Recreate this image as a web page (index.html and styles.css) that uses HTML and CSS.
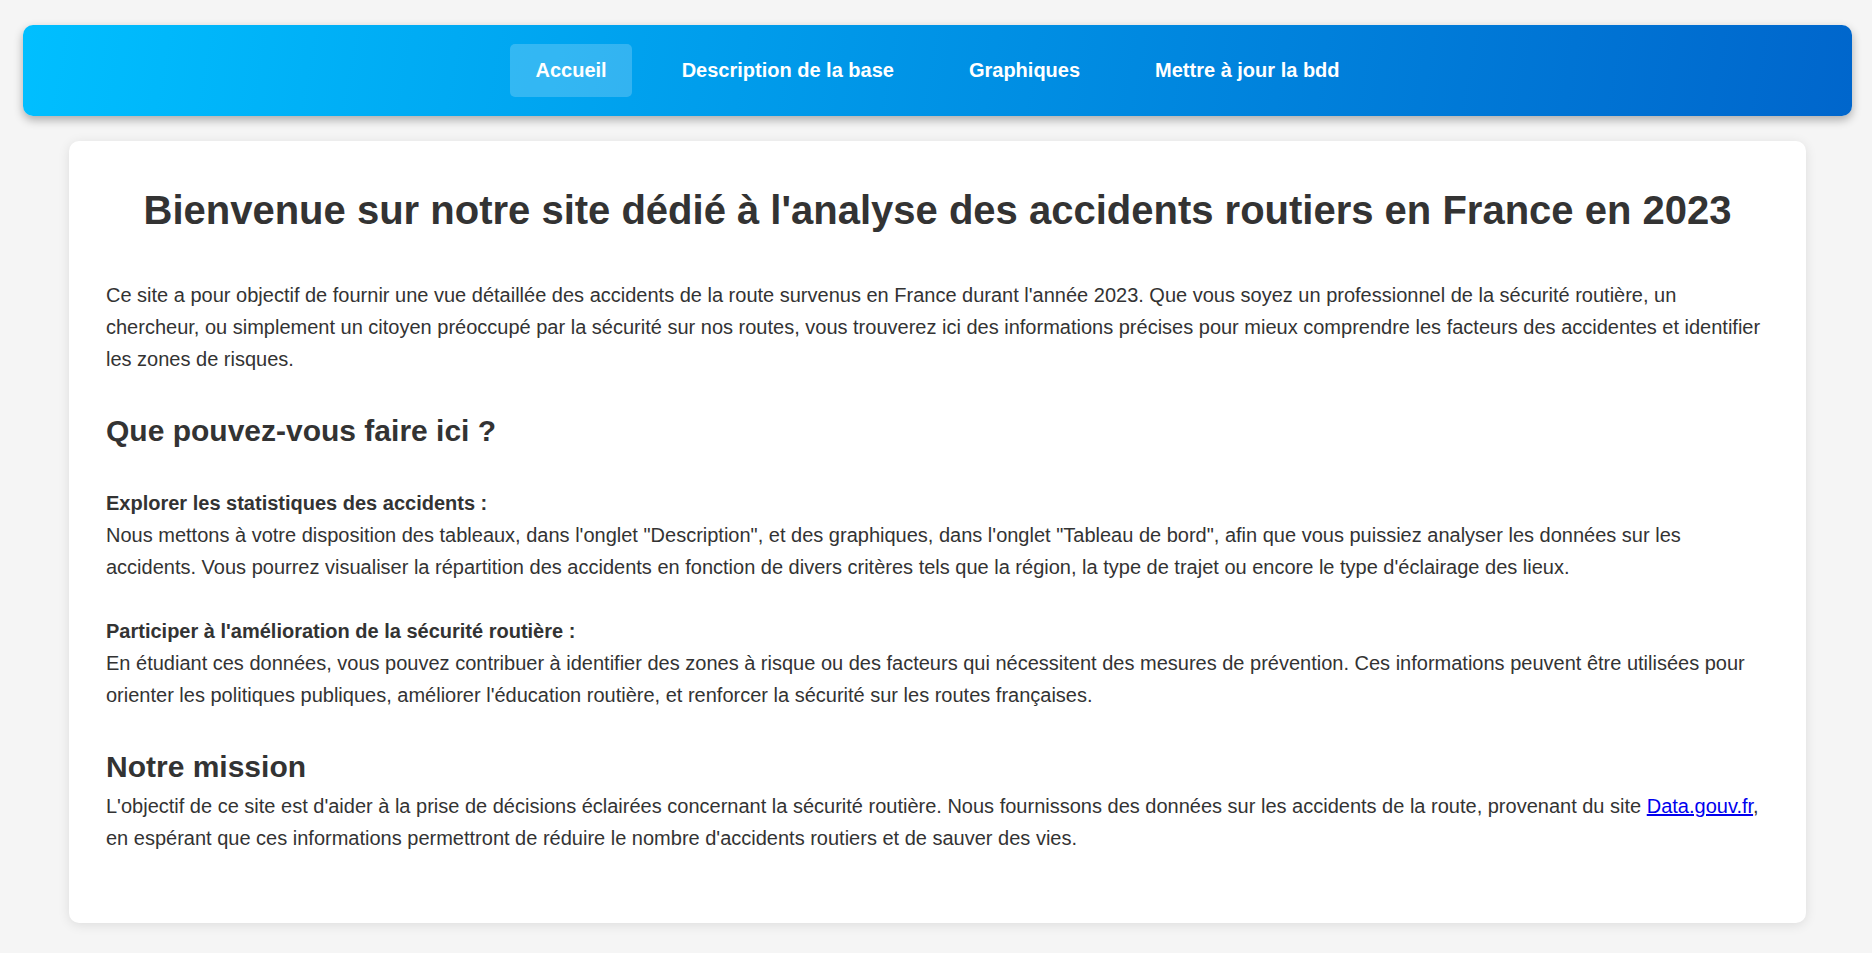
FILE: index.html
```html
<!DOCTYPE html>
<html lang="fr">
<head>
<meta charset="utf-8">
<title>Accidents routiers en France 2023</title>
<link rel="stylesheet" href="styles.css">
</head>
<body>
<div class="page">
  <nav class="navbar">
    <ul class="nav-list">
      <li><a class="nav-link active" href="#">Accueil</a></li>
      <li><a class="nav-link" href="#">Description de la base</a></li>
      <li><a class="nav-link" href="#">Graphiques</a></li>
      <li><a class="nav-link" href="#">Mettre à jour la bdd</a></li>
    </ul>
  </nav>
  <main class="card">
    <h1 class="title">Bienvenue sur notre site dédié à l'analyse des accidents routiers en France en 2023</h1>
    <p class="intro">Ce site a pour objectif de fournir une vue détaillée des accidents de la route survenus en France durant l'année 2023. Que vous soyez un professionnel de la sécurité routière, un chercheur, ou simplement un citoyen préoccupé par la sécurité sur nos routes, vous trouverez ici des informations précises pour mieux comprendre les facteurs des accidentes et identifier les zones de risques.</p>
    <h2 class="section-title first">Que pouvez-vous faire ici ?</h2>
    <p class="item"><strong>Explorer les statistiques des accidents :</strong><br>Nous mettons à votre disposition des tableaux, dans l'onglet "Description", et des graphiques, dans l'onglet "Tableau de bord", afin que vous puissiez analyser les données sur les accidents. Vous pourrez visualiser la répartition des accidents en fonction de divers critères tels que la région, la type de trajet ou encore le type d'éclairage des lieux.</p>
    <p class="item"><strong>Participer à l'amélioration de la sécurité routière :</strong><br>En étudiant ces données, vous pouvez contribuer à identifier des zones à risque ou des facteurs qui nécessitent des mesures de prévention. Ces informations peuvent être utilisées pour orienter les politiques publiques, améliorer l'éducation routière, et renforcer la sécurité sur les routes françaises.</p>
    <h2 class="section-title mission">Notre mission</h2>
    <p class="last">L'objectif de ce site est d'aider à la prise de décisions éclairées concernant la sécurité routière. Nous fournissons des données sur les accidents de la route, provenant du site <a class="ext" href="#">Data.gouv.fr</a>, en espérant que ces informations permettront de réduire le nombre d'accidents routiers et de sauver des vies.</p>
  </main>
</div>
</body>
</html>
```

FILE: styles.css
```css
* {
  box-sizing: border-box;
}

html, body {
  margin: 0;
  padding: 0;
  background: #f5f5f5;
  font-family: "Liberation Sans", Arial, sans-serif;
  color: #333333;
}

.page {
  padding: 25px 20px 29px 23px;
}

.navbar {
  background: linear-gradient(100deg, #00bfff 0%, #0066cc 100%);
  border-radius: 10px;
  box-shadow: 0 4px 10px rgba(0, 0, 0, 0.3);
  padding: 19px 0;
}

.nav-list {
  list-style: none;
  margin: 0;
  padding: 0;
  display: flex;
  justify-content: center;
  gap: 25px;
}

.nav-link {
  display: block;
  padding: 15px 25px;
  line-height: 23px;
  font-size: 20px;
  font-weight: bold;
  color: #ffffff;
  text-decoration: none;
  border-radius: 5px;
}

.nav-link.active {
  background: rgba(255, 255, 255, 0.2);
}

.card {
  display: block;
  margin: 25px 46px 0 46px;
  background: #ffffff;
  border-radius: 10px;
  box-shadow: 0 2px 12px rgba(0, 0, 0, 0.1);
  padding: 46px 37px 69px 37px;
  font-size: 20px;
  line-height: 32px;
}

.title {
  margin: 0 0 46px 0;
  font-size: 40px;
  line-height: 46px;
  font-weight: bold;
  text-align: center;
  color: #333333;
}

.intro {
  margin: 0;
}

.section-title {
  font-size: 30px;
  line-height: 34.5px;
  font-weight: bold;
  color: #333333;
}

.section-title.first {
  margin: 39px 0 38px 0;
}

.section-title.mission {
  margin: 39px 0 6px 0;
}

.item {
  margin: 0 0 32px 0;
}

.last {
  margin: 0;
}

.ext {
  color: #0000ee;
  text-decoration: underline;
}
```
